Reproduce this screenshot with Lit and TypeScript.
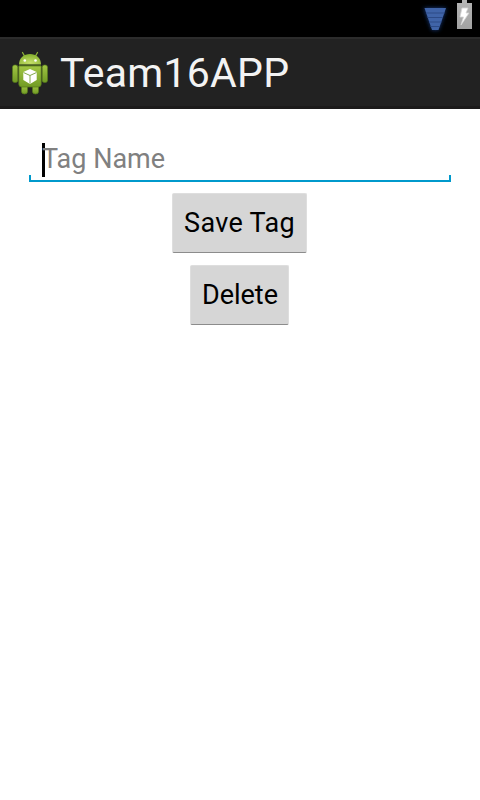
import { LitElement, html, css } from "lit";
import { customElement } from "lit/decorators.js";

@customElement("app-root")
export class AppRoot extends LitElement {
  static styles = css`
    :host {
      display: flex;
      flex-direction: column;
      width: 480px;
      height: 800px;
      overflow: hidden;
      background: #fff;
      font-family: Roboto, "Liberation Sans", sans-serif;
    }
    .status {
      display: flex;
      justify-content: flex-end;
      height: 37px;
      background: #000;
      flex: none;
    }
    .status svg { display: block; }
    .wifi { margin-right: 2px; }
    .battery { margin-right: 8px; }
    .bar {
      box-sizing: border-box;
      display: flex;
      align-items: center;
      height: 72px;
      flex: none;
      background: #222;
      border-top: 2px solid #2c2c2c;
      border-bottom: 3px solid #1c1b1b;
      padding-left: 6px;
    }
    .bar svg { display: block; flex: none; }
    .title {
      margin: 0 0 0 6px;
      font-weight: 400;
      font-size: 41px;
      line-height: 48px;
      letter-spacing: 0.25px;
      color: #f3f3f3;
      white-space: nowrap;
    }
    .form {
      display: flex;
      flex-direction: column;
      align-items: center;
      padding-top: 28px;
    }
    .field {
      display: flex;
      flex-direction: column;
      width: 422px;
      height: 45px;
    }
    .input {
      display: flex;
      align-items: center;
      height: 38px;
      flex: none;
      padding-left: 13px;
    }
    .caret {
      width: 3px;
      height: 34px;
      margin-top: 8px;
      background: #000;
    }
    .hint {
      margin: 5px 0 0 -3px;
      font-size: 27px;
      line-height: 32px;
      color: #808080;
      white-space: nowrap;
    }
    .line {
      box-sizing: border-box;
      height: 7px;
      border: 2px solid #0099cc;
      border-top: 0;
    }
    .btn {
      box-sizing: border-box;
      height: 60px;
      padding: 0;
      border: 1px solid #dedede;
      border-bottom: 1px solid #8c8c8c;
      border-radius: 2px;
      background: #d6d6d6;
      font: 400 27px/32px Roboto, "Liberation Sans", sans-serif;
      color: #000;
      white-space: nowrap;
    }
    .save { width: 135px; margin: 11px 1px 12px 0; letter-spacing: 0.3px; }
    .delete { width: 99px; margin-right: 1px; padding-left: 1px; }
  `;

  render() {
    return html`
      <div class="status">
        <svg class="wifi" width="34" height="37" viewBox="0 0 34 37">
          <defs>
            <filter id="glow" x="-40%" y="-40%" width="180%" height="180%"><feGaussianBlur stdDeviation="2" /></filter>
          </defs>
          <path d="M4 8H26L18.500 30H12Z" fill="#2450a8" opacity=".75" filter="url(#glow)" />
          <path d="M4.500 8H26L18.500 30H12Z" fill="#4064a8" />
          <path d="M6 13H24.500M7.500 17.500H23M9 22H21.500M10.500 26.500H20" stroke="#2c4a86" stroke-width="1" />
        </svg>
        <svg class="battery" width="16" height="37" viewBox="0 0 16 37">
          <defs>
            <linearGradient id="cell" x2="0" y2="1"><stop stop-color="#b5b5b5" /><stop offset="1" stop-color="#a2a2a2" /></linearGradient>
          </defs>
          <path d="M6 0H11V3H16V29H1V3H6Z" fill="url(#cell)" />
          <path d="M6 8H12L10 13H13L5 25L7.500 17H4Z" fill="#fff" stroke="#d6d6d6" stroke-width=".8" />
        </svg>
      </div>
      <header class="bar">
        <svg width="48" height="48" viewBox="0 0 48 48">
          <defs>
            <linearGradient id="body" x2="0" y2="1"><stop stop-color="#a2c644" /><stop offset="1" stop-color="#719b24" /></linearGradient>
            <radialGradient id="head" cx=".5" cy=".8" r=".8"><stop stop-color="#c5df69" /><stop offset="1" stop-color="#83ae2c" /></radialGradient>
          </defs>
          <path d="M18.500 7L16.500 3.500M29.500 7L31.500 3.500" stroke="#8db338" stroke-width="1.300" stroke-linecap="round" />
          <g fill="url(#body)" stroke="#567a1b" stroke-width=".7">
            <rect x="6.500" y="16" width="5.300" height="17.500" rx="2.200" />
            <rect x="36.200" y="16" width="5.300" height="17.500" rx="2.200" />
            <path d="M15.500 36H21.500V42.500Q21.500 45 18.500 45T15.500 42.500ZM26.500 36H32.500V42.500Q32.500 45 29.500 45T26.500 42.500Z" />
            <path d="M12.800 17H35.200V35Q35.200 38 32.200 38H15.800Q12.800 38 12.800 35Z" />
          </g>
          <path d="M13 15.500C13 9 18 5 24 5S35 9 35 15.500Z" fill="url(#head)" />
          <path d="M13 16.200H35" stroke="#54751c" stroke-width="1" />
          <circle cx="18.800" cy="11.500" r="1.300" fill="#fff" />
          <circle cx="29.500" cy="11.500" r="1.300" fill="#fff" />
          <path d="M24 20L30.700 23V31L24 35L17.300 31V23Z" fill="#fff" />
          <path d="M17.500 23.500L24 26.500L30.500 23.500M24 26.500V34.500" fill="none" stroke="#83a84b" stroke-width="1" />
        </svg>
        <h1 class="title">Team16APP</h1>
      </header>
      <main class="form">
        <div class="field">
          <div class="input"><span class="caret"></span><span class="hint">Tag Name</span></div>
          <div class="line"></div>
        </div>
        <button class="btn save">Save Tag</button>
        <button class="btn delete">Delete</button>
      </main>
    `;
  }
}
